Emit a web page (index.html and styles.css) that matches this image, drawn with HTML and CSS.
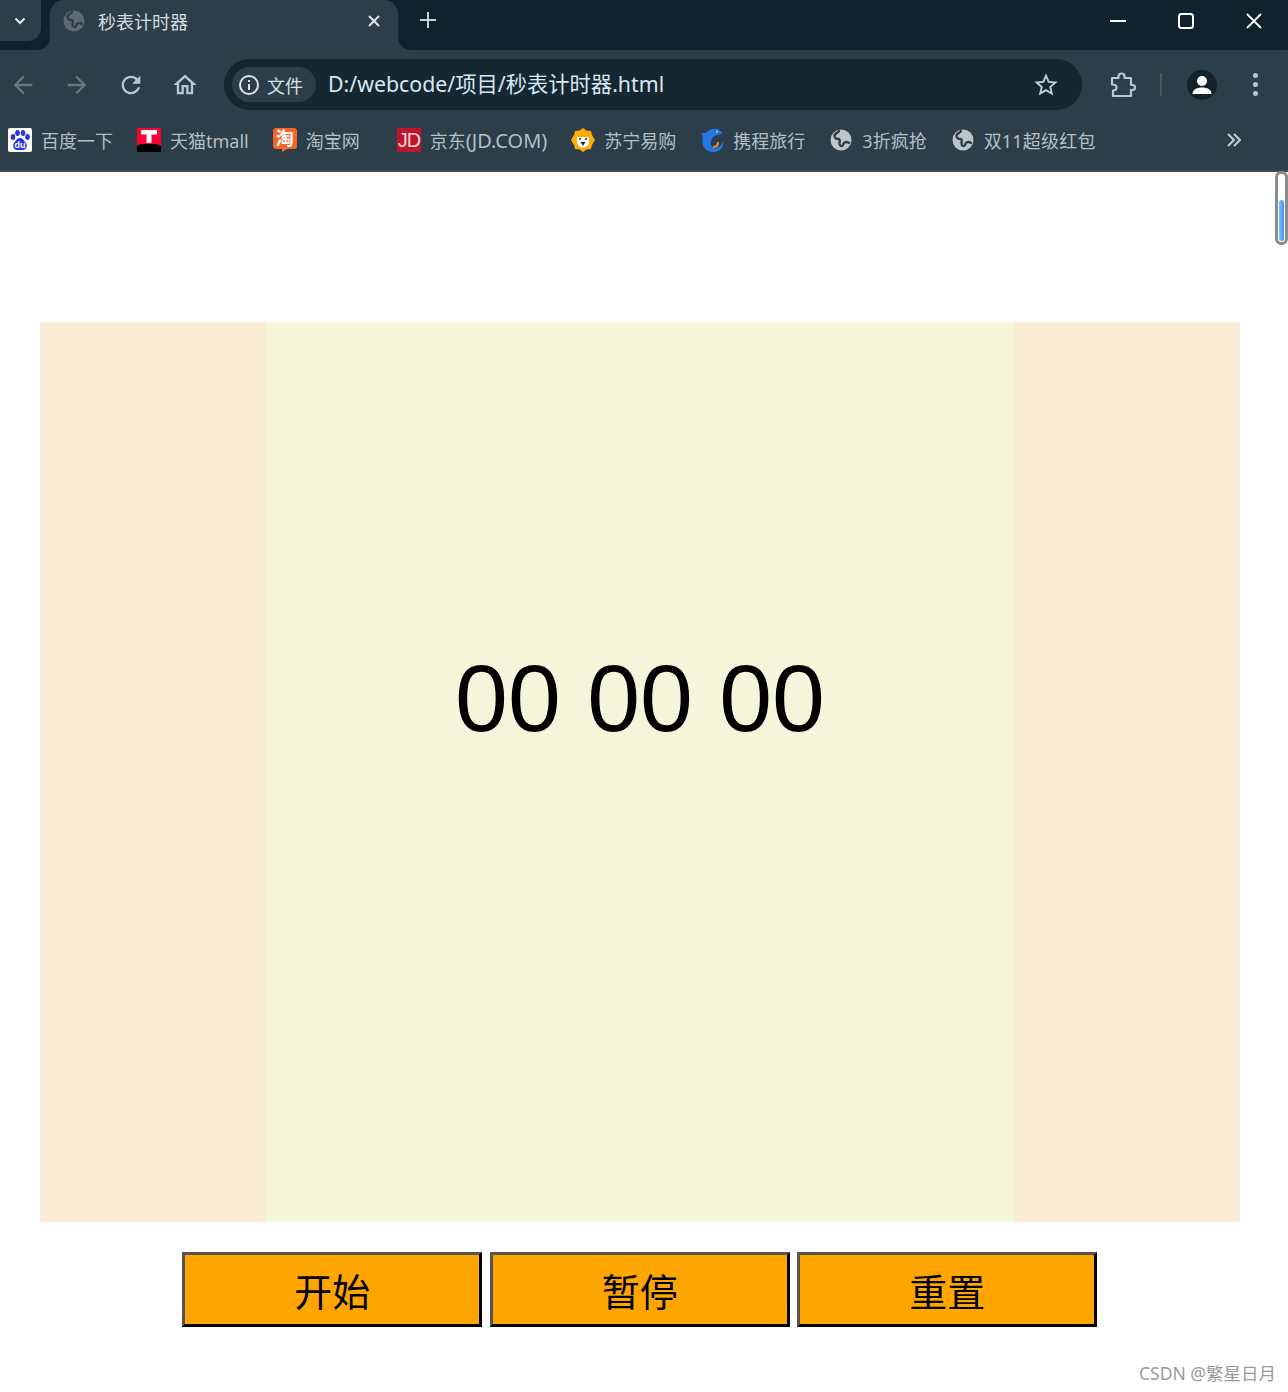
FILE: index.html
```html
<!DOCTYPE html>
<html lang="zh-CN">
<head>
  <meta charset="UTF-8">
  <title>秒表计时器</title>
  <link rel="stylesheet" href="styles.css">
</head>
<body>

<svg class="defs" width="0" height="0" aria-hidden="true">
  <symbol id="globe" viewBox="0 0 22 22">
    <circle cx="11" cy="11" r="10.500" fill="currentColor"/>
    <path d="M9 2c-1 2-4 2-4.500 4.500C4.200 9 6.500 10 8.500 10c1.500 0 1.500 2 1 3.500-.3 1.500.5 4 2.500 3.500 1.500-.5 1-2.500 2.500-3.500 1.500-.8 3.500-.5 4.500.5" fill="none" stroke="#2c3e49" stroke-width="2.400" stroke-linecap="round"/>
  </symbol>
</svg>

<header class="browser">
  <div class="tabstrip">
    <div class="tab-menu">
      <svg width="14" height="14" viewBox="0 0 14 14"><path d="M2.500 4.500 7 9l4.500-4.500" fill="none" stroke="#e3e9ed" stroke-width="2"/></svg>
    </div>
    <div class="tab">
      <svg class="tab-icon" width="22" height="22"><use href="#globe"/></svg>
      <span class="tab-title">秒表计时器</span>
      <svg class="tab-close" width="14" height="14" viewBox="0 0 14 14"><path d="M2 2l10 10M12 2 2 12" stroke="#dfe6ea" stroke-width="2"/></svg>
    </div>
    <svg class="new-tab" width="18" height="18" viewBox="0 0 18 18"><path d="M9 1v16M1 9h16" stroke="#c9d3d9" stroke-width="2"/></svg>
    <div class="win-controls">
      <svg width="16" height="16" viewBox="0 0 16 16"><path d="M0 8h16" stroke="#fff" stroke-width="2"/></svg>
      <svg width="16" height="16" viewBox="0 0 16 16"><rect x="1" y="1" width="14" height="14" rx="2.500" fill="none" stroke="#fff" stroke-width="2"/></svg>
      <svg width="16" height="16" viewBox="0 0 16 16"><path d="M1 1l14 14M15 1 1 15" stroke="#fff" stroke-width="1.800"/></svg>
    </div>
  </div>

  <div class="toolbar">
    <svg class="nav-icon dim" viewBox="0 0 24 24"><path d="M20 11H7.830l5.590-5.590L12 4l-8 8 8 8 1.410-1.410L7.830 13H20v-2z"/></svg>
    <svg class="nav-icon dim" viewBox="0 0 24 24"><path d="M4 11h12.170l-5.590-5.590L12 4l8 8-8 8-1.410-1.410L16.170 13H4v-2z"/></svg>
    <svg class="nav-icon" viewBox="0 0 24 24"><path d="M17.650 6.350C16.200 4.900 14.210 4 12 4c-4.420 0-7.990 3.580-7.990 8s3.570 8 7.990 8c3.730 0 6.840-2.550 7.730-6h-2.080c-.82 2.330-3.040 4-5.650 4-3.310 0-6-2.690-6-6s2.690-6 6-6c1.660 0 3.140.69 4.220 1.780L13 11h7V4l-2.350 2.350z"/></svg>
    <svg class="nav-icon" viewBox="0 0 24 24"><path d="M12 5.690l5 4.500V18h-2v-6H9v6H7v-7.810l5-4.500M12 3L2 12h3v8h6v-6h2v6h6v-8h3L12 3z"/></svg>

    <div class="omnibox">
      <div class="site-chip">
        <svg width="22" height="22" viewBox="0 0 22 22"><circle cx="11" cy="11" r="9" fill="none" stroke="#dbe4e9" stroke-width="2"/><path d="M11 10v6M11 6v2" stroke="#dbe4e9" stroke-width="2"/></svg>
        <span>文件</span>
      </div>
      <span class="url">D:/webcode/项目/秒表计时器.html</span>
      <svg class="star" width="28" height="28" viewBox="0 0 24 24"><path d="M22 9.240l-7.190-.62L12 2 9.190 8.630 2 9.240l5.460 4.730L5.820 21 12 17.270 18.180 21l-1.630-7.030L22 9.240zM12 15.400l-3.760 2.270 1-4.280-3.320-2.880 4.380-.38L12 6.100l1.710 4.040 4.380.38-3.320 2.880 1 4.280L12 15.400z"/></svg>
    </div>

    <svg class="ext" width="28" height="28" viewBox="0 0 28 28"><path d="M4 7h6.500V5.500a3 3 0 0 1 6 0V7H23v7h1.500a2.500 2.500 0 0 1 0 5H23v6H5v-5.500c2.500 0 3.500-1.500 3.500-3S7 13.500 4 13.500V7z" fill="none" stroke="#b4c9d8" stroke-width="2.200" stroke-linejoin="round"/></svg>
    <span class="tool-sep"></span>
    <div class="avatar">
      <svg width="22" height="22" viewBox="0 0 22 22"><circle cx="11" cy="7" r="5" fill="#fff"/><path d="M1.500 20c0-4.500 4.500-6.500 9.500-6.500s9.500 2 9.500 6.500z" fill="#fff"/></svg>
    </div>
    <div class="dots"><i></i><i></i><i></i></div>
  </div>

  <div class="bookmarks">
    <a class="bm">
      <svg width="24" height="24" viewBox="0 0 24 24"><rect width="24" height="24" rx="2" fill="#fff"/><g fill="#2932e1"><ellipse cx="5" cy="9" rx="2.300" ry="3"/><ellipse cx="9.500" cy="5" rx="2.300" ry="3"/><ellipse cx="15" cy="5" rx="2.300" ry="3"/><ellipse cx="19.500" cy="9" rx="2.300" ry="3"/><path d="M12 10c3 0 4 3 6 5 2 3 0 7-3 7H9c-3 0-5-4-3-7 2-2 3-5 6-5z"/></g><text x="12" y="20" class="ico-du">du</text></svg>
      <span>百度一下</span>
    </a>
    <a class="bm">
      <svg width="24" height="24" viewBox="0 0 24 24"><rect width="24" height="24" fill="#000"/><path d="M0 0h24v18c-2-1-3-2-5-2H5c-2 0-3 1-5 2z" fill="#ff0036"/><path d="M4 2h16v4.500h-5.500V15h-5V6.500H4z" fill="#fff"/></svg>
      <span>天猫tmall</span>
    </a>
    <a class="bm bm-wide">
      <span class="ico-tao">淘</span>
      <span>淘宝网</span>
    </a>
    <a class="bm">
      <svg width="24" height="24" viewBox="0 0 24 24"><rect width="24" height="24" fill="#c0142a"/><text x="12" y="19" class="ico-jd">JD</text></svg>
      <span>京东<span class="bm-latin">(JD.COM)</span></span>
    </a>
    <a class="bm">
      <svg width="24" height="24" viewBox="0 0 24 24"><path d="M12 0l3.500 2.500L20 3l1 4 3 5-3 5-1 4-4.500.5L12 24l-3.500-2.500L4 21l-1-4-3-5 3-5 1-4 4.500-.5z" fill="#fdab03"/><path d="M6 9h12v5c0 3-2.500 5.500-6 5.500S6 17 6 14z" fill="#fff"/><path d="M9.500 14h5L12 18z" fill="#222"/><circle cx="9" cy="11" r="1" fill="#222"/><circle cx="15" cy="11" r="1" fill="#222"/></svg>
      <span>苏宁易购</span>
    </a>
    <a class="bm">
      <svg width="24" height="24" viewBox="0 0 24 24"><path d="M1 5h5C9 1 14 0 18 1l5 4-5 2c-4 0-6 3-7 6-1 4 1 7 4 7 4 0 7-3 8-7 1 7-3 11-10 11C6 24 2 19 2.500 12 2.700 9 3 7 1 5z" fill="#2577e3"/><circle cx="17" cy="3.800" r=".8" fill="#fff"/><path d="M13 19c3 0 5-2 5-5" fill="none" stroke="#f08a1d" stroke-width="2"/></svg>
      <span>携程旅行</span>
    </a>
    <a class="bm">
      <svg class="bm-globe" width="22" height="22"><use href="#globe"/></svg>
      <span>3折疯抢</span>
    </a>
    <a class="bm">
      <svg class="bm-globe" width="22" height="22"><use href="#globe"/></svg>
      <span class="bm-last">双11超级红包</span>
    </a>
    <svg class="bm-more" width="16" height="14" viewBox="0 0 16 14"><path d="M2 1l6 6-6 6M8 1l6 6-6 6" fill="none" stroke="#c3ced5" stroke-width="2"/></svg>
  </div>
</header>

<main class="page">
  <div class="box">
    <div class="time">00 00 00</div>
  </div>
  <div class="btns">
    <button>开始</button>
    <button>暂停</button>
    <button>重置</button>
  </div>
</main>

<div class="scroll-thumb"><span></span></div>
<div class="watermark">CSDN @繁星日月</div>

</body>
</html>
```

FILE: styles.css
```css
/* Page base */
html, body {
  margin: 0;
  padding: 0;
  height: 1392px;
  overflow: hidden;
  background: #fff;
}

body {
  position: relative;
  font-family: "Noto Sans", "Noto Sans CJK SC", sans-serif;
}

.defs {
  position: absolute;
}

/* Browser chrome */
.browser {
  height: 170px;
  background: #2c3e49;
  border-bottom: 2px solid #47494b;
}

.tabstrip {
  display: flex;
  align-items: flex-start;
  height: 50px;
  background: #10222d;
}

.tab-menu {
  display: flex;
  align-items: center;
  justify-content: center;
  width: 41px;
  height: 41px;
  padding-right: 2px;
  box-sizing: border-box;
  background: #2c3e49;
  border-bottom-right-radius: 13px;
}

.tab {
  position: relative;
  display: flex;
  align-items: center;
  width: 348px;
  height: 50px;
  margin-left: 9px;
  background: #2c3e49;
  border-radius: 14px 14px 0 0;
  padding-bottom: 8px;
  box-sizing: border-box;
}

.tab::before,
.tab::after {
  content: "";
  position: absolute;
  bottom: 0;
  width: 12px;
  height: 12px;
}

.tab::before {
  left: -12px;
  background: radial-gradient(circle at 0 0, #10222d 11.5px, #2c3e49 12px);
}

.tab::after {
  right: -12px;
  background: radial-gradient(circle at 100% 0, #10222d 11.5px, #2c3e49 12px);
}

.tab-icon {
  margin-left: 13px;
  color: #5f6b74;
}

.tab-title {
  margin-left: 13px;
  font-size: 18px;
  color: #d3dce1;
}

.tab-close {
  margin-left: auto;
  margin-right: 17px;
}

.new-tab {
  margin: 11px 0 0 21px;
}

.win-controls {
  display: flex;
  gap: 52px;
  margin: 13px 26px 0 auto;
}

.toolbar {
  display: flex;
  align-items: center;
  height: 60px;
  padding-top: 9px;
  box-sizing: border-box;
  background: #2c3e49;
  border-top-right-radius: 14px;
}

.nav-icon {
  width: 28px;
  height: 28px;
  margin-left: 26px;
  fill: #b4c9d8;
}

.nav-icon:first-child {
  margin-left: 9px;
}

.nav-icon.dim {
  fill: #67777f;
}

.omnibox {
  display: flex;
  align-items: center;
  width: 858px;
  height: 51px;
  margin-left: 25px;
  background: #152730;
  border-radius: 26px;
  box-sizing: border-box;
  padding: 0 22px 0 8px;
}

.site-chip {
  display: flex;
  align-items: center;
  gap: 7px;
  height: 35px;
  width: 84px;
  box-sizing: border-box;
  padding-left: 6px;
  background: #2c3e49;
  border-radius: 18px;
  color: #d8e1e6;
  font-size: 18px;
}

.url {
  margin: 0 0 4px 12px;
  font-size: 21.3px;
  color: #d6e7f2;
  white-space: nowrap;
}

.star {
  margin-left: auto;
  fill: #c0ced8;
}

.ext {
  margin-left: 26px;
}

.tool-sep {
  width: 2px;
  height: 23px;
  margin-left: 24px;
  background: #46575f;
}

.avatar {
  display: flex;
  align-items: center;
  justify-content: center;
  width: 30px;
  height: 30px;
  margin-left: 25px;
  border-radius: 50%;
  background: #11232d;
}

.dots {
  display: flex;
  flex-direction: column;
  gap: 4px;
  margin-left: 36px;
}

.dots i {
  display: block;
  width: 5px;
  height: 5px;
  border-radius: 50%;
  background: #b4c9d8;
}

.bookmarks {
  display: flex;
  align-items: center;
  gap: 24px;
  height: 60px;
  padding-left: 8px;
  box-sizing: border-box;
  color: #b3bfc7;
  font-size: 18px;
}

.bm {
  display: flex;
  align-items: center;
  gap: 9px;
  white-space: nowrap;
}

.bm-wide {
  margin-right: 13px;
}

.bm-latin {
  font-size: 20px;
}

.bm-last {
  letter-spacing: .2px;
}

.bm-globe {
  margin: 0 1px;
  color: #bcc5cb;
}

.bm-more {
  margin-left: auto;
  margin-right: 46px;
}

.ico-du {
  font: bold 9px "Liberation Sans", sans-serif;
  fill: #fff;
  text-anchor: middle;
}

.ico-tao {
  position: relative;
  width: 24px;
  height: 21px;
  margin-bottom: 3px;
  border-radius: 3px;
  background: #f4652a;
  color: #fff;
  font-size: 18px;
  font-weight: bold;
  line-height: 21px;
  text-align: center;
}

.ico-tao::after {
  content: "";
  position: absolute;
  left: 9px;
  top: 21px;
  border-top: 3px solid #f4652a;
  border-right: 5px solid transparent;
}

.ico-jd {
  font: 20px "Liberation Sans", sans-serif;
  letter-spacing: -1px;
  fill: #f6d5d8;
  text-anchor: middle;
}

/* Stopwatch */
.page {
  width: 1280px;
  padding-top: 150px;
}

.box {
  display: flex;
  justify-content: center;
  width: 1200px;
  height: 900px;
  margin: 0 auto;
  background: linear-gradient(to right, #faebd7 225px, #f5f5dc 225px, #f5f5dc 975px, #faebd7 975px);
}

.time {
  font-family: "Liberation Sans", sans-serif;
  font-size: 95px;
  line-height: 900px;
  height: 900px;
  color: #000;
  margin-top: -74px;
}

.btns {
  display: flex;
  justify-content: center;
  gap: 7.5px;
  margin: 30px 0.5px 0 0;
}

button {
  width: 300px;
  height: 75px;
  padding: 0;
  background: orange;
  border-width: 3px;
  border-style: solid;
  border-color: #555 #000 #000 #555;
  font-family: "Noto Sans CJK SC", sans-serif;
  font-size: 38px;
  color: #000;
}

/* Overlay bits */
.scroll-thumb {
  position: absolute;
  top: 171px;
  left: 1275px;
  width: 7px;
  height: 68px;
  border: 3px solid #8c8c8c;
  border-radius: 6px;
  background: #fff;
}

.scroll-thumb span {
  position: absolute;
  left: 1px;
  right: 1px;
  top: 26px;
  bottom: 1px;
  border-radius: 3px;
  background: linear-gradient(to right, #82c2fb, #3f93f5);
}

.watermark {
  position: absolute;
  top: 1360px;
  right: 12px;
  font-size: 17.5px;
  color: #9a9a9a;
  white-space: nowrap;
}
```
